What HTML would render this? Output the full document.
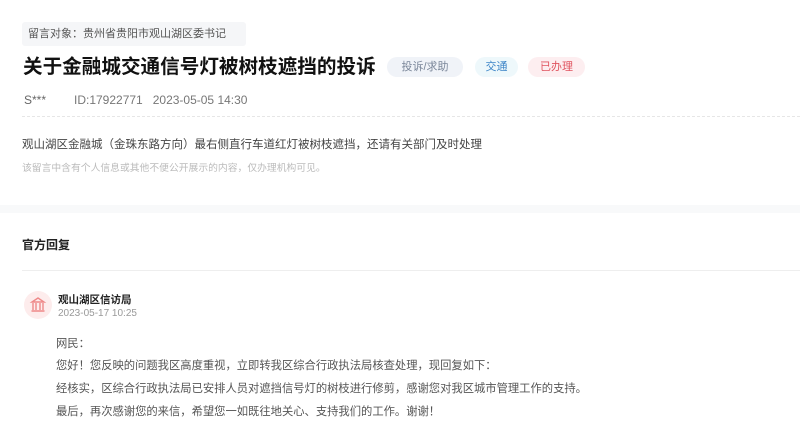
<!DOCTYPE html>
<html><head><meta charset="utf-8"><style>
*{margin:0;padding:0;box-sizing:border-box}
body{width:800px;height:440px;background:#fff;font-family:"Liberation Sans","Noto Sans CJK SC",sans-serif;position:relative;overflow:hidden;color:#333}
.a{position:absolute;white-space:nowrap}
.tag{left:22px;top:22px;height:24px;width:224px;background:#f5f6f8;border-radius:3px;font-size:11px;color:#555;line-height:24px;padding-left:6px}
.title{left:23px;top:54px;font-size:19.6px;font-weight:bold;color:#111;line-height:26px}
.pill{top:57px;height:20px;line-height:20px;border-radius:10px;font-size:11px;text-align:center}
.meta{top:93px;font-size:12px;color:#777;line-height:14px}
.dash{left:22px;top:116px;width:778px;border-top:1px dashed #e6e6e6}
.c{left:22px;top:136px;font-size:11.5px;color:#444}
.n{left:22px;top:160px;font-size:9.8px;color:#bbb}
.band{left:0;top:205px;width:800px;height:8px;background:#f8f9fa}
.h{left:22px;top:236px;font-size:12px;font-weight:bold;color:#222}
.line{left:22px;top:270px;width:778px;border-top:1px solid #eee}
.ic{left:24px;top:291px;width:28px;height:28px;border-radius:50%;background:#fdecec}
.r{left:56px;font-size:11.3px;color:#555}
</style></head><body>
<div class="a tag">留言对象：贵州省贵阳市观山湖区委书记</div>
<div class="a title">关于金融城交通信号灯被树枝遮挡的投诉</div>
<div class="a pill" style="left:387px;width:76px;background:#f0f3f8;color:#7a8699">投诉/求助</div>
<div class="a pill" style="left:475px;width:43px;background:#eef8fb;color:#3f86c8">交通</div>
<div class="a pill" style="left:528px;width:57px;background:#fdeef0;color:#e0545f">已办理</div>
<div class="a meta" style="left:24px;color:#666">S***</div>
<div class="a meta" style="left:74px">ID:17922771&nbsp;&nbsp;&nbsp;2023-05-05 14:30</div>
<div class="a dash"></div>
<div class="a c">观山湖区金融城（金珠东路方向）最右侧直行车道红灯被树枝遮挡，还请有关部门及时处理</div>
<div class="a n">该留言中含有个人信息或其他不便公开展示的内容，仅办理机构可见。</div>
<div class="a band"></div>
<div class="a h">官方回复</div>
<div class="a line"></div>
<div class="a ic"><svg width="28" height="28" viewBox="0 0 28 28"><g fill="none" stroke="#e88" stroke-width="1.4"><path d="M8 11 L14 7 L20 11 Z"/><path d="M9 12v7M12 12v7M16 12v7M19 12v7M7.5 20h13"/></g></svg></div>
<div class="a" style="left:58px;top:292px;font-size:10.5px;font-weight:bold;color:#222">观山湖区信访局</div>
<div class="a" style="left:58px;top:308px;font-size:10px;color:#999">2023-05-17 10:25</div>
<div class="a r" style="top:335px">网民：</div>
<div class="a r" style="top:357px">您好！您反映的问题我区高度重视，立即转我区综合行政执法局核查处理，现回复如下：</div>
<div class="a r" style="top:380px">经核实，区综合行政执法局已安排人员对遮挡信号灯的树枝进行修剪，感谢您对我区城市管理工作的支持。</div>
<div class="a r" style="top:403px">最后，再次感谢您的来信，希望您一如既往地关心、支持我们的工作。谢谢！</div>
</body></html>
